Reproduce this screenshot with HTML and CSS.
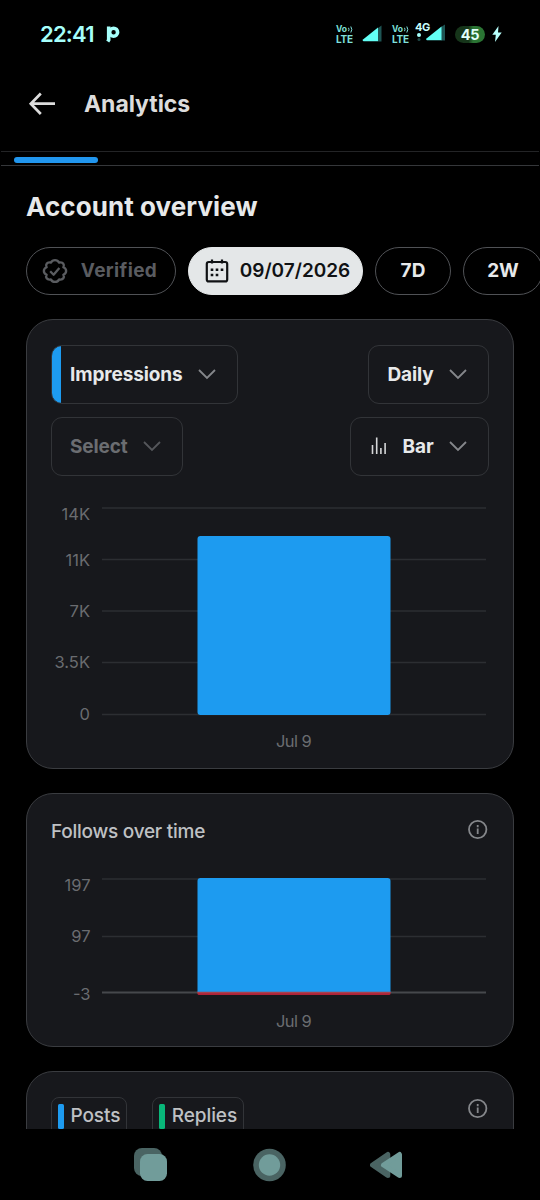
FILE: index.html
```html
<!DOCTYPE html>
<html lang="en">
<head>
    <meta charset="UTF-8">
    <meta name="viewport" content="width=device-width, initial-scale=1.0">
    <title>Analytics</title>
    <link rel="stylesheet" href="styles.css">
</head>
<body>
    <div class="phone">
        <div class="status-bar">
            <span class="time">22:41</span>
            <svg class="app-mark" width="14" height="17" viewBox="0 0 14 17">
                <path d="M2.700 .5v13.500l-1 1.500" stroke="#a6fffb" stroke-width="3.600" fill="none"/>
                <circle cx="7.600" cy="6.200" r="4" stroke="#a6fffb" stroke-width="3.600" fill="none"/>
            </svg>
            <div class="status-icons">
                <div class="volte">
                    <div class="vo">
                        <span>Vo</span>
                        <svg width="5" height="7" viewBox="0 0 5 7" fill="none" stroke="#7fe0dc"><path d="M.5 1.800q1 1.700 0 3.400M2.800 .5q2 3 0 6"/></svg>
                    </div>
                    <span>LTE</span>
                </div>
                <svg class="signal" width="21" height="17" viewBox="0 0 21 17">
                    <path d="M16 3l3.500-2.500v16H16z" fill="#1e5554"/>
                    <path d="M1 14.500L16 2.500v13.700H1.600Q0 16 1 14.500z" fill="#63fff5"/>
                </svg>
                <div class="volte volte-2">
                    <div class="vo">
                        <span>Vo</span>
                        <svg width="5" height="7" viewBox="0 0 5 7" fill="none" stroke="#7fe0dc"><path d="M.5 1.800q1 1.700 0 3.400M2.800 .5q2 3 0 6"/></svg>
                    </div>
                    <span>LTE</span>
                </div>
                <div class="data">
                    <span class="data-label">4G</span>
                    <svg width="31" height="19" viewBox="0 0 31 19">
                        <circle cx="3" cy="13" r="2" fill="#a6fffb"/>
                        <circle cx="3" cy="17.500" r="1.500" fill="#1e4544"/>
                        <path d="M25 5l4-2.500v16h-4z" fill="#1e5554"/>
                        <path d="M10.500 16.500L25.500 4.500v13.700H11Q9.500 18 10.500 16.500z" fill="#63fff5"/>
                    </svg>
                </div>
                <span class="battery">45</span>
                <svg class="bolt" width="10" height="16" viewBox="0 0 10 16">
                    <path d="M6.500 0L.3 8.800h3.500L3 16l6.700-9.500H6z" fill="#b8fffc"/>
                </svg>
            </div>
        </div>

        <header class="header">
            <svg width="28" height="24" viewBox="0 0 28 24" fill="none" stroke="#dcdcdc" stroke-width="2.700">
                <path d="M13.800 1.500L3.800 11.700l10 10.300M3.800 11.700H28"/>
            </svg>
            <h1>Analytics</h1>
        </header>
        <div class="tabs"><div class="tab-indicator"></div></div>

        <main class="content">
            <h2>Account overview</h2>
            <div class="filters">
                <div class="chip chip-verified">
                    <svg width="26" height="26" viewBox="0 0 28 28" fill="none" stroke="#5a5c60" stroke-width="2.500" stroke-linejoin="round">
                        <path d="M14 2.200Q17 2.200 18.500 5Q21.600 4.200 23 6.200Q24.200 7.800 23 10Q26 11.300 26 14T23 18Q24.200 20.200 23 21.800Q21.600 23.800 18.500 23Q17 25.800 14 25.800T9.500 23Q6.400 23.800 5 21.800Q3.800 20.200 5 18Q2 16.700 2 14T5 10Q3.800 7.800 5 6.200Q6.400 4.200 9.500 5Q11 2.200 14 2.200z"/>
                        <path d="M8.800 14.300l3.700 3.700 6.200-7.300"/>
                    </svg>
                    <span>Verified</span>
                </div>
                <div class="chip chip-date">
                    <svg width="24" height="24" viewBox="0 0 24 24" fill="none" stroke="#101214" stroke-width="2.200">
                        <rect x="1.800" y="3" width="20.400" height="19.400" rx="2"/>
                        <path d="M7 .5v4M17 .5v4"/>
                        <path d="M10.700 10.700h2.600M15.700 10.700h2.600M5.700 10.700h2.600M5.700 16h2.600M10.700 16h2.600" stroke-width="2.600"/>
                    </svg>
                    <span>09/07/2026</span>
                </div>
                <div class="chip chip-7d">7D</div>
                <div class="chip chip-2w">2W</div>
            </div>

            <section class="card card-main">
                <div class="select-row">
                    <div class="select select-metric">
                        <span>Impressions</span>
                        <svg class="chevron" width="18" height="11" viewBox="0 0 18 11"><path d="M1 1l8 8 8-8"/></svg>
                    </div>
                    <div class="select">
                        <span>Daily</span>
                        <svg class="chevron" width="18" height="11" viewBox="0 0 18 11"><path d="M1 1l8 8 8-8"/></svg>
                    </div>
                </div>
                <div class="select-row">
                    <div class="select select-empty">
                        <span>Select</span>
                        <svg class="chevron" width="18" height="11" viewBox="0 0 18 11"><path d="M1 1l8 8 8-8"/></svg>
                    </div>
                    <div class="select select-type">
                        <svg class="bars" width="16" height="18" viewBox="0 0 16 18" stroke="#d5d6d8" stroke-width="1.600">
                            <path d="M1.500 8v9M5.700.5V17M9.900 11v6M14.100 6v11"/>
                        </svg>
                        <span>Bar</span>
                        <svg class="chevron" width="18" height="11" viewBox="0 0 18 11"><path d="M1 1l8 8 8-8"/></svg>
                    </div>
                </div>
                <svg class="chart" width="437" height="266" viewBox="0 0 437 266">
                    <path class="grid" d="M51 21h384M51 72.500h384M51 124h384M51 175.500h384M51 227.500h384"/>
                    <rect x="146.500" y="49" width="193" height="179" rx="3" fill="#1d9bf0"/>
                    <g class="y-labels">
                        <text x="39" y="32.500">14K</text>
                        <text x="39" y="78.500">11K</text>
                        <text x="39" y="129.500">7K</text>
                        <text x="39" y="181">3.5K</text>
                        <text x="39" y="232.500">0</text>
                    </g>
                    <text class="x-label" x="242.500" y="259.500">Jul 9</text>
                </svg>
            </section>

            <section class="card card-follows">
                <div class="card-head">
                    <h3>Follows over time</h3>
                    <svg class="info" width="20" height="21" viewBox="0 0 20 21">
                        <circle cx="9.700" cy="10.500" r="8.700"/>
                        <path d="M9.700 9.500V15M9.700 6v2.300"/>
                    </svg>
                </div>
                <svg class="chart chart-follows" width="437" height="168" viewBox="0 0 437 168">
                    <path class="grid" d="M51 13h384M51 70.500h384"/>
                    <path d="M51 126.500h384" stroke="#46484c" stroke-width="2"/>
                    <path d="M146.500 126V15q0-3 3-3h187q3 0 3 3v111z" fill="#1d9bf0"/>
                    <path d="M146.500 126h193v1.500q0 1.500-1.500 1.500h-190q-1.500 0-1.500-1.500z" fill="#b02236"/>
                    <path d="M146.500 126.500h193" stroke="#a5424f" stroke-width="1.500"/>
                    <g class="y-labels">
                        <text x="39.500" y="25">197</text>
                        <text x="39.500" y="76">97</text>
                        <text x="39.500" y="133.500">-3</text>
                    </g>
                    <text class="x-label" x="242.500" y="160.500">Jul 9</text>
                </svg>
            </section>

            <section class="card card-posts">
                <div class="legend">
                    <div class="legend-item"><span class="swatch"></span><span>Posts</span></div>
                    <div class="legend-item legend-replies"><span class="swatch"></span><span>Replies</span></div>
                </div>
                <svg class="info" width="20" height="22" viewBox="0 0 20 22">
                    <circle cx="9.700" cy="11.500" r="8.700"/>
                    <path d="M9.700 10.500V16M9.700 7v2.300"/>
                </svg>
            </section>
        </main>

        <nav class="nav-bar">
            <svg width="34" height="34" viewBox="0 0 34 34">
                <rect x="0" y="0" width="28" height="28" rx="8" fill="#4a6463"/>
                <rect x="6" y="6" width="27" height="27" rx="7.500" fill="#719c9a"/>
            </svg>
            <svg width="34" height="34" viewBox="0 0 34 34">
                <circle cx="17.500" cy="17" r="16.300" fill="#4a6463"/>
                <circle cx="17.500" cy="17" r="10.700" fill="#719c9a"/>
            </svg>
            <svg width="34" height="34" viewBox="0 0 34 34" stroke-linejoin="round" stroke-width="5">
                <path d="M2.500 17l15.300-10.500v21z" fill="#4a6463" stroke="#4a6463"/>
                <path d="M13.500 17l16-10.500v21z" fill="#719c9a" stroke="#719c9a"/>
            </svg>
        </nav>
    </div>
</body>
</html>
```

FILE: styles.css
```css
* {
    box-sizing: border-box;
}
body {
    margin: 0;
    background: #000;
    color: #e7e9ea;
    font-family: Inter, "Liberation Sans", sans-serif;
}
svg {
    display: block;
    flex: none;
}
h1, h2, h3 {
    margin: 0;
}
.phone {
    width: 540px;
    height: 1200px;
    overflow: hidden;
    display: flex;
    flex-direction: column;
}

/* status bar */
.status-bar {
    height: 68px;
    padding: 0 38px 0 40px;
    display: flex;
    align-items: center;
    flex: none;
}
.time {
    width: 54px;
    font-size: 22px;
    font-weight: 600;
    letter-spacing: -0.8px;
    color: #a6fffb;
}
.app-mark {
    margin-left: 12px;
}
.status-icons {
    margin-left: auto;
    display: flex;
    align-items: center;
}
.volte {
    width: 19px;
    display: flex;
    flex-direction: column;
    font-size: 10px;
    font-weight: 700;
    line-height: 10px;
    letter-spacing: -0.2px;
    color: #7fe0dc;
}
.vo {
    display: flex;
    align-items: center;
    gap: 1px;
    height: 10px;
    font-size: 8.500px;
    line-height: 9px;
}
.signal {
    margin-left: 7px;
    margin-top: -2px;
}
.volte-2 {
    margin-left: 9px;
}
.data {
    position: relative;
    margin-left: 5px;
    margin-top: -5px;
}
.data-label {
    position: absolute;
    left: -1px;
    top: 0;
    font-size: 11px;
    font-weight: 700;
    line-height: 11px;
    letter-spacing: -0.5px;
    color: #c9fffd;
    z-index: 1;
}
.battery {
    width: 30px;
    height: 17px;
    margin-left: 8px;
    border-radius: 9px;
    background: linear-gradient(90deg, #16351a 45%, #2a7433 60%);
    color: #e2fffb;
    font-size: 14.500px;
    font-weight: 700;
    line-height: 17px;
    letter-spacing: -0.3px;
    text-align: center;
}
.bolt {
    margin-left: 7px;
}

/* header */
.header {
    height: 83px;
    padding: 0 28px;
    display: flex;
    align-items: flex-start;
    gap: 28px;
    flex: none;
}
.header svg {
    margin-top: 24px;
    margin-left: -1px;
    margin-right: 1px;
}
.header h1 {
    margin-top: 21px;
    font-size: 23px;
    line-height: 30px;
    font-weight: 700;
    letter-spacing: -0.05px;
    color: #dcdcdc;
}
.tabs {
    height: 15px;
    margin: 0 1px;
    padding: 5px 13px 0;
    border-top: 1px solid #232426;
    border-bottom: 1px solid #35373a;
    flex: none;
}
.tab-indicator {
    width: 84px;
    height: 6px;
    border-radius: 3px;
    background: #2196ee;
}

/* content */
.content {
    height: 963px;
    padding: 24px 26px 0;
    overflow: hidden;
    flex: none;
}
.content h2 {
    font-size: 26px;
    line-height: 33px;
    font-weight: 700;
    letter-spacing: 0.08px;
}
.filters {
    display: flex;
    gap: 12px;
    margin-top: 24px;
    margin-right: -26px;
    overflow: hidden;
}
.chip {
    height: 48px;
    padding-bottom: 1px;
    border: 1px solid #505256;
    border-radius: 24px;
    display: flex;
    align-items: center;
    justify-content: center;
    flex: none;
    font-size: 19px;
    font-weight: 700;
}
.chip-verified {
    width: 150px;
    padding-right: 3px;
    gap: 13px;
    color: #5a5c60;
    letter-spacing: 0.35px;
}
.chip-date {
    width: 175px;
    padding-left: 4px;
    gap: 11px;
    background: #e4e7e8;
    border-color: #e4e7e8;
    color: #101214;
    font-weight: 600;
}
.chip-7d {
    width: 76px;
}
.chip-2w {
    width: 80px;
}
.card {
    border: 1px solid #3a3c40;
    border-radius: 27px;
    background: #17181c;
    padding: 25px 24px 0;
    margin-top: 24px;
}
.card-main {
    height: 450px;
}
.select-row {
    display: flex;
    justify-content: space-between;
    margin-bottom: 13px;
}
.select {
    height: 59px;
    padding: 0 21px 1px 18px;
    border: 1px solid #323438;
    border-radius: 11px;
    display: flex;
    align-items: center;
    gap: 15.500px;
    font-size: 19px;
    font-weight: 700;
    letter-spacing: -0.12px;
    overflow: hidden;
}
.select-metric {
    background: linear-gradient(90deg, #1d9bf0 9px, transparent 9px);
}
.select-empty {
    color: #6b6d71;
}
.select-type {
    padding-left: 20px;
}
.chevron {
    fill: none;
    stroke: #85878b;
    stroke-width: 1.800;
}
.select-empty .chevron {
    stroke: #55575b;
}
.chart {
    margin-top: -2px;
}
.grid {
    stroke: #2c2e32;
    stroke-width: 1.500;
}
.y-labels {
    text-anchor: end;
}
.y-labels, .x-label {
    fill: #6a6c70;
    font-size: 16.500px;
}
.x-label {
    text-anchor: middle;
    letter-spacing: -0.6px;
}
.card-follows {
    height: 254px;
}
.card-head {
    height: 25px;
    display: flex;
    justify-content: space-between;
    align-items: flex-start;
}
.card-head h3 {
    padding-top: 1px;
    font-size: 19px;
    line-height: 24px;
    font-weight: 500;
    letter-spacing: -0.25px;
    color: #bfc1c4;
}
.info {
    margin-right: 1px;
    fill: none;
    stroke: #85878b;
    stroke-width: 1.800;
}
.chart-follows {
    margin-top: 22px;
}
.card-posts {
    height: 200px;
    display: flex;
    justify-content: space-between;
    align-items: flex-start;
}
.legend {
    display: flex;
    gap: 25px;
}
.legend-item {
    height: 44px;
    padding: 6px 6px 0;
    border: 1px solid #323438;
    border-radius: 8px;
    display: flex;
    gap: 6.500px;
    font-size: 19px;
    line-height: 24px;
    font-weight: 500;
    letter-spacing: -0.1px;
    color: #bfc1c4;
}
.swatch {
    width: 6px;
    height: 25px;
    border-radius: 1.500px;
    background: #1d9bf0;
}
.legend-replies .swatch {
    background: #08b779;
}

/* system navigation */
.nav-bar {
    height: 71px;
    padding: 0 136px 0 134px;
    display: flex;
    justify-content: space-between;
    align-items: center;
    flex: none;
}
```
